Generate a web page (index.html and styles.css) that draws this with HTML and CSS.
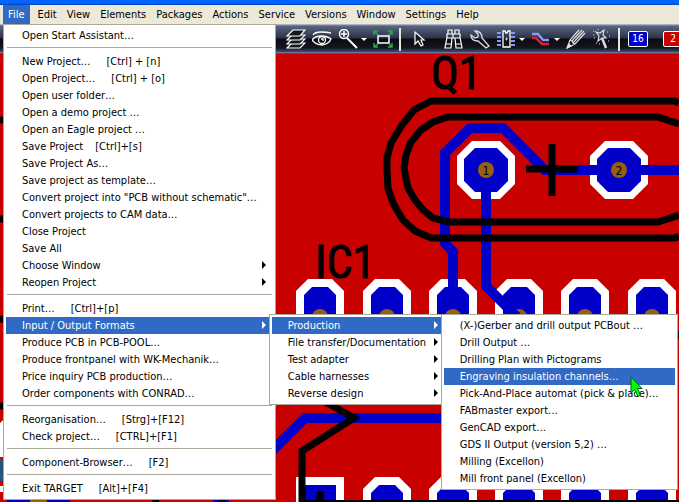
FILE: index.html
```
<!DOCTYPE html>
<html lang="en">
<head>
<meta charset="utf-8">
<title>TARGET</title>
<link rel="stylesheet" href="styles.css">
</head>
<body>
<div class="app">
  <div class="titlebar"></div>
  <nav class="menubar" aria-label="Main">
    <div class="menu-root">
      <button class="top open">File</button>
      <ul class="menu file-menu">
        <li><button>Open Start Assistant…</button></li>
        <li class="sep"></li>
        <li><button>New Project…<kbd>[Ctrl] + [n]</kbd></button></li>
        <li><button>Open Project…<kbd>[Ctrl] + [o]</kbd></button></li>
        <li><button>Open user folder…</button></li>
        <li><button>Open a demo project …</button></li>
        <li><button>Open an Eagle project …</button></li>
        <li><button>Save Project<kbd class="near">[Ctrl]+[s]</kbd></button></li>
        <li><button>Save Project As…</button></li>
        <li><button>Save project as template…</button></li>
        <li><button>Convert project into "PCB without schematic"…</button></li>
        <li><button>Convert projects to CAM data…</button></li>
        <li><button>Close Project</button></li>
        <li><button>Save All</button></li>
        <li><button class="more">Choose Window</button></li>
        <li><button class="more">Reopen Project</button></li>
        <li class="sep"></li>
        <li><button>Print…<kbd>[Ctrl]+[p]</kbd></button></li>
        <li>
          <button class="more active">Input / Output Formats</button>
          <ul class="menu sub formats">
            <li>
              <button class="more active">Production</button>
              <ul class="menu sub production">
                <li><button>(X-)Gerber and drill output PCBout …</button></li>
                <li><button>Drill Output …</button></li>
                <li><button>Drilling Plan with Pictograms</button></li>
                <li><button class="active">Engraving insulation channels…</button>
                  <svg class="pointer" width="13" height="22" viewBox="0 0 13 22"><path d="M1 1V17L4.500 13.500L8 20.500L10.500 19L7.500 12.500H12Z" fill="#0f0" stroke="#062"/></svg></li>
                <li><button>Pick-And-Place automat (pick &amp; place)…</button></li>
                <li><button>FABmaster export…</button></li>
                <li><button>GenCAD export…</button></li>
                <li><button>GDS II Output (version 5,2) …</button></li>
                <li><button>Milling (Excellon)</button></li>
                <li><button>Mill front panel (Excellon)</button></li>
              </ul>
            </li>
            <li><button class="more">File transfer/Documentation</button></li>
            <li><button class="more">Test adapter</button></li>
            <li><button class="more">Cable harnesses</button></li>
            <li><button class="more">Reverse design</button></li>
          </ul>
        </li>
        <li><button>Produce PCB in PCB-POOL…</button></li>
        <li><button>Produce frontpanel with WK-Mechanik…</button></li>
        <li><button>Price inquiry PCB production…</button></li>
        <li><button>Order components with CONRAD…</button></li>
        <li class="sep"></li>
        <li><button>Reorganisation…<kbd>[Strg]+[F12]</kbd></button></li>
        <li><button>Check project…<kbd>[CTRL]+[F1]</kbd></button></li>
        <li class="sep"></li>
        <li><button>Component-Browser…<kbd>[F2]</kbd></button></li>
        <li class="sep"></li>
        <li><button>Exit TARGET<kbd>[Alt]+[F4]</kbd></button></li>
      </ul>
    </div>
    <button class="top">Edit</button>
    <button class="top">View</button>
    <button class="top">Elements</button>
    <button class="top">Packages</button>
    <button class="top">Actions</button>
    <button class="top">Service</button>
    <button class="top">Versions</button>
    <button class="top">Window</button>
    <button class="top">Settings</button>
    <button class="top">Help</button>
  </nav>
  <div class="toolbar" role="toolbar" aria-label="Tools">
    <button class="tool" aria-label="Layers"><svg width="20" height="20" viewBox="0 0 20 20" fill="#15171f" stroke="#fff" stroke-width="1.200"><path d="M1 19L6 14H19L14 19Z"/><path d="M1 15L6 10H19L14 15Z"/><path d="M1 11L6 6H19L14 11Z"/><path d="M1 7L7 1H19L14 7Z"/></svg></button>
    <button class="tool" aria-label="View"><svg width="20" height="20" viewBox="0 0 20 20" fill="none" stroke="#fff" stroke-width="1.300"><path d="M1 6Q3 3 9 3Q15 3 19 4M0 11Q3 7 9 7Q15 7 19 10Q17 15 10 16Q4 16 0 11Z"/><circle cx="10" cy="11" r="3.500"/><path d="M9 10H11V12"/></svg></button>
    <button class="tool" aria-label="Zoom"><svg width="20" height="20" viewBox="0 0 20 20" fill="none" stroke="#fff" stroke-width="1.500"><circle cx="6" cy="5" r="4.500"/><path d="M3 5H9M6 2V8"/><path d="M9 9L19 19" stroke-width="2"/></svg></button>
    <button class="caret" aria-label="Zoom options"></button>
    <button class="tool" aria-label="Fit"><svg width="20" height="20" viewBox="0 0 20 20" fill="none"><rect x="5" y="7" width="11" height="7" stroke="#fff" stroke-width="1.500"/><path d="M5 6L1 2M1 6V2H5M16 6L19 2M15 2H19V6M5 15L1 18M1 14V18H5M16 15L19 18M15 18H19V14" stroke="#2da44e" stroke-width="1.500"/></svg></button>
    <span class="rule"></span>
    <button class="tool" aria-label="Select"><svg width="20" height="20" viewBox="0 0 20 20"><path d="M6 3V15L9 12L12 17L14 16L12 11H15Z" fill="#15171f" stroke="#fff" stroke-width="1.200"/></svg></button>
    <button class="tool wide" aria-label="Find"><svg width="20" height="20" viewBox="0 0 20 20" fill="none" stroke="#fff" stroke-width="1.200"><path d="M4 5V1H8V5M11 5V1H15V5M3 5H16V9H3ZM3 8L1 19H7L8 9M11 9L12 19H18L16 8M9 5V9M2 15H7M12 15H17"/></svg></button>
    <button class="tool" aria-label="Options"><svg width="20" height="20" viewBox="0 0 20 20" fill="none" stroke="#ddd" stroke-width="1.300"><path d="M5 2L8 5V8L5 9L1 6Q1 12 8 12L16 19L19 17L12 9Q12 2 5 2Z"/></svg></button>
    <button class="tool" aria-label="Component"><svg width="20" height="20" viewBox="0 0 20 20" fill="none"><path d="M1 4H5M1 8H5M1 12H5M1 16H5M15 4H19M15 8H19M15 12H19M15 16H19" stroke="#8c94ff" stroke-width="2"/><path d="M7 2H9L10 4H11L12 2H14V18H7Z" stroke="#fff" stroke-width="1.300"/><path d="M9 10H12M10.500 8.500V11.500" stroke="#ccc"/></svg></button>
    <button class="caret" aria-label="Component options"></button>
    <button class="tool" aria-label="Tracks"><svg width="20" height="20" viewBox="0 0 20 20" fill="none" stroke-width="2.500"><path d="M1 5H7L12 11H18" stroke="#8c94ff"/><path d="M1 9H5L11 15H18" stroke="#e0202a"/></svg></button>
    <button class="caret" aria-label="Track options"></button>
    <button class="tool" aria-label="Draw"><svg width="20" height="20" viewBox="0 0 20 20" fill="none" stroke="#ddd" stroke-width="1.200"><path d="M1 19L4 11L13 1M1 19L9 15L19 4M4 11L6 12L7 14L9 15M6 12L16 1M7 14L18 2"/><path d="M1 19L3 15L5 17Z" fill="#fff"/></svg></button>
    <button class="tool" aria-label="Magic"><svg width="20" height="20" viewBox="0 0 20 20" fill="none" stroke="#ddd"><path d="M4 3L8 4L12 1L11 6L14 9L10 9L6 12L7 7Z" stroke-width="1.200"/><path d="M10 9L14 19" stroke-width="2.500"/><path d="M1 2H2M15 3H16M17 7H18M2 9H3M4 14H5M16 12H17M7 15H8M1 6H2M6 0V1" /></svg></button>
    <span class="rule"></span>
    <button class="tool layer blue">16</button>
    <button class="tool layer red">2</button>
  </div>
  <main class="board">
    <svg class="pcb" width="100%" height="100%">
      <defs>
        <g id="pad"><path d="M-24 40V12L-12 0H12L24 12V40Z" fill="#fff"/><path d="M-16 40V16L-8 8H8L16 16V40Z" fill="#0000c8"/><circle cy="38" r="8" fill="#985f0f"/></g>
        <g id="via"><path d="M-29-14L-14-29H14L29-14V14L14 29H-14L-29 14Z" fill="#fff"/><path d="M-22-11L-11-22H11L22-11V11L11 22H-11L-22 11Z" fill="#0000c8"/></g>
      </defs>
      <g transform="translate(0 -54)">
        <use href="#pad" x="320" y="279"/><use href="#pad" x="387" y="279"/><use href="#pad" x="453" y="279"/>
        <use href="#pad" x="519" y="279"/><use href="#pad" x="585" y="279"/><use href="#pad" x="652" y="279"/>
        <path d="M296 502V477H344V502" fill="#fff"/><path d="M303 502V485H336V502" fill="#0000c8"/>
        <use href="#pad" x="387" y="477"/><use href="#pad" x="453" y="477"/><use href="#pad" x="519" y="477"/><use href="#pad" x="585" y="477"/><use href="#pad" x="652" y="477"/>
        <use href="#via" x="486" y="170"/><use href="#via" x="619" y="170"/>
        <g fill="none" stroke="#0000c8" stroke-width="10">
          <path d="M453 300V252L445 243V153L470 128H503L545 170H1600"/>
          <path d="M486 170V286L517 317"/><path d="M265 458L305 418H460"/>
        </g>
        <circle cx="486" cy="170" r="8" fill="#985f0f"/><circle cx="619" cy="170" r="8" fill="#985f0f"/>
        <text class="pin" x="486" y="175">1</text><text class="pin" x="619" y="175">2</text>
        <g fill="none" stroke="#000" stroke-width="7">
          <path d="M679 103L675 101H431L414 110L402 125L391 143L387 158V170L388 188L393 203L403 220L415 231L431 238H675L679 236"/>
          <path d="M679 124L658 117H448L433 122L421 130L411 142L406 155L404 168L408 188L415 200L423 210L433 218L448 222H658L679 215"/>
          <path d="M552 144V196M526 169H578M320 399L354 418L302 451V502M320 491V502M677 335H690"/>
          <path d="M302 502H1600" stroke-width="4"/>
          <path d="M0 120H4M0 219H4M0 319H4M0 406H4"/>
        </g>
        <path d="M0 423L3 420V457H0Z M0 486H3V492H0Z" fill="#fff"/>
        <path d="M0 459H3V481H0Z" fill="#24567e"/>
        <path d="M7 500H70V502H7Z M213 500H229V502H213Z" fill="#0000c8"/>
        <path d="M30 500H47V502H30Z" fill="#985f0f"/>
        <path d="M152 500H159V502H152Z M219 500H225V502H219Z"/>
        <text class="label" x="431" y="89">Q1</text>
        <text class="label" x="315" y="278">IC1</text>
      </g>
    </svg>
  </main>
</div>
</body>
</html>
```
FILE: styles.css
```
* { box-sizing: border-box; }
body { margin: 0; background: #c80000; }
body, button { font: 11px/17px "DejaVu Sans Condensed", "Liberation Sans", sans-serif; }
button { border: 0; margin: 0; padding: 0; background: none; color: #000; }
kbd { font: inherit; margin-left: 16px; }
kbd.near { margin-left: 12px; }
.app { display: flex; flex-direction: column; height: 100vh; overflow: hidden; }
.titlebar { flex: none; height: 5px; background: linear-gradient(#0066ff 60%, #0040b8); }
.menubar { position: relative; z-index: 2; flex: none; display: flex; height: 19px; padding-left: 3px; background: #ece9d8; }
.menu-root { position: relative; margin-right: 2px; }
.top { height: 19px; padding: 0 5px; white-space: nowrap; }
.top.open { background: #316ac5; color: #fff; padding-right: 6px; }
.menu { position: absolute; top: 100%; left: 0; margin: 0; padding: 2px; list-style: none; background: #fff; border: 1px solid #aca899; }
.menu li { position: relative; }
.menu button { display: block; width: 100%; height: 17px; padding: 0 16px; text-align: left; white-space: nowrap; }
.menu .active { background: #316ac5; color: #fff; }
.menu .more { position: relative; }
.more::after { content: ""; position: absolute; right: 7px; top: 4px; border: 4px solid transparent; border-left-color: currentColor; border-right: 0; }
.menu .sep { height: 9px; padding: 3px 1px; }
.sep::before { content: ""; display: block; height: 1px; background: #aca899; }
.file-menu { min-width: 272px; }
.menu.sub { top: -3px; left: calc(100% - 4px); }
.formats { min-width: 179px; }
.production { min-width: 236px; }
.pointer { position: absolute; right: 32px; top: 8px; z-index: 3; }
.toolbar { flex: none; display: flex; align-items: center; gap: 6px; height: 30px; padding-left: 286px; overflow: hidden;
  background: linear-gradient(#c8ccd8 0, #59637f 2px, #2c3348 14px, #0b0c11 15px, #15171f 24px, #414d78 28px, #8f98b8 29px, #300 30px); }
.tool, .caret, .rule { flex: none; }
.tool { width: 20px; height: 20px; }
.tool svg { display: block; }
.caret { width: 5px; height: 3px; margin-left: -3px; border: 3px solid transparent; border-top-color: #fff; border-bottom: 0; }
.rule { width: 2px; height: 23px; margin-right: 2px; background: #e8e6da; }
.wide { margin-left: 9px; }
.layer { height: 16px; border: 1px solid #fff; border-radius: 2px; color: #fff; font-size: 10px; line-height: 14px; text-align: center; }
.blue { background: #0000c8; }
.red { background: #c80000; margin-left: 9px; }
.board { flex: 1; min-height: 0; }
.pcb { display: block; overflow: visible; }
.pin { font: 12px "DejaVu Sans Condensed", sans-serif; text-anchor: middle; }
.label { font: 46px "Roboto Condensed", "Open Sans Condensed", "Roboto", sans-serif; stroke: #000; stroke-width: 1px; stroke-linejoin: round; }
```
